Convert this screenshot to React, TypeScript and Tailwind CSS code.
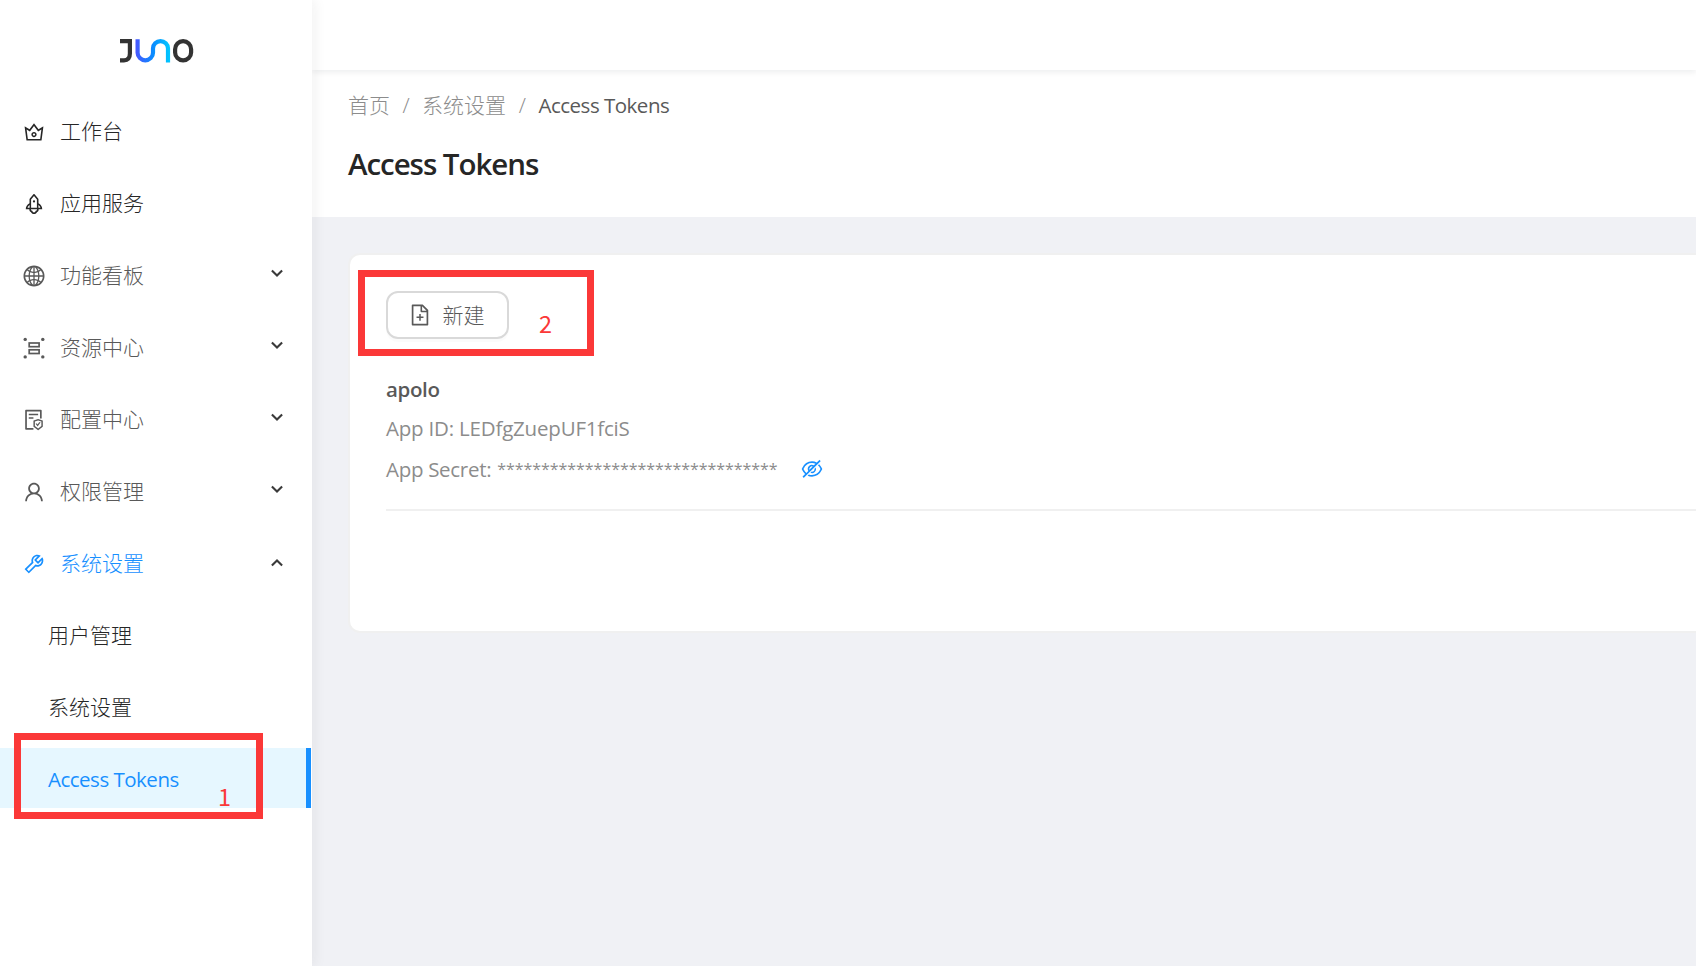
import type { ReactNode } from "react";
import {
  AiOutlineCrown,
  AiOutlineRocket,
  AiOutlineGlobal,
  AiOutlineFileProtect,
  AiOutlineUser,
  AiOutlineTool,
  AiOutlineFileAdd,
  AiOutlineEyeInvisible,
} from "react-icons/ai";

function Logo() {
  return (
    <svg width="76" height="26" viewBox="0 0 76 26" fill="none">
      <defs>
        <linearGradient id="wave" x1="16" y1="0" x2="52" y2="0" gradientUnits="userSpaceOnUse">
          <stop offset="0" stopColor="#4a55ff" />
          <stop offset="0.5" stopColor="#0a8cff" />
          <stop offset="1" stopColor="#00ccff" />
        </linearGradient>
      </defs>
      <path d="M1 3.2H10.9V15.5Q10.9 22.3 5 22.3H1" stroke="#333333" strokeWidth="4.2" />
      <path
        d="M18.6 1.2V14.8A7.7 7.5 0 0 0 34 14.8V10.5A7.5 7.3 0 0 1 49 10.5V24.4"
        stroke="url(#wave)"
        strokeWidth="4.2"
      />
      <rect x="56.1" y="3.2" width="16" height="19.2" rx="8" stroke="#333333" strokeWidth="4.2" />
    </svg>
  );
}

function GroupIcon() {
  return (
    <svg width="24" height="24" viewBox="0 0 24 24" fill="none">
      <g fill="currentColor">
        <circle cx="3.2" cy="3.4" r="1.7" />
        <circle cx="20.8" cy="3.4" r="1.7" />
        <circle cx="3.2" cy="20.9" r="1.7" />
        <circle cx="20.8" cy="20.9" r="1.7" />
      </g>
      <g stroke="currentColor" strokeWidth="1.7">
        <rect x="7.2" y="7" width="9.9" height="3.7" />
        <rect x="7.2" y="13.8" width="9.9" height="3.7" />
      </g>
    </svg>
  );
}

function Chevron({ up = false }: { up?: boolean }) {
  return (
    <svg width="12" height="9" viewBox="0 0 12 9" fill="none" className={up ? "" : "-mt-0.5"}>
      <path
        d={up ? "M0.9 7.6L6 2.5L11.1 7.6" : "M0.9 1.4L6 6.5L11.1 1.4"}
        stroke="#3a3a3a"
        strokeWidth="2.1"
      />
    </svg>
  );
}

function MenuItem({
  icon,
  label,
  tone,
  arrow,
}: {
  icon: ReactNode;
  label: string;
  tone: string;
  arrow?: "up" | "down";
}) {
  return (
    <li className={`flex h-[60px] items-center pr-[29.5px] pl-[22.4px] ${tone}`}>
      <span className="mt-[3px] w-6 text-2xl">{icon}</span>
      <span className="mt-[3px] ml-[13.6px] grow font-light">{label}</span>
      {arrow && <Chevron up={arrow === "up"} />}
    </li>
  );
}

function Sidebar() {
  return (
    <aside className="relative z-10 flex w-[312px] shrink-0 flex-col bg-white shadow-[3px_0_12px_rgba(29,35,41,0.06)]">
      <div className="flex h-[100px] items-center pt-0.5 pl-[119px]">
        <Logo />
      </div>
      <ul className="flex flex-col gap-3">
        <MenuItem icon={<AiOutlineCrown />} label="工作台" tone="text-[#262626]" />
        <MenuItem icon={<AiOutlineRocket />} label="应用服务" tone="text-[#262626]" />
        <MenuItem icon={<AiOutlineGlobal />} label="功能看板" tone="text-[#595959]" arrow="down" />
        <MenuItem icon={<GroupIcon />} label="资源中心" tone="text-[#595959]" arrow="down" />
        <MenuItem icon={<AiOutlineFileProtect />} label="配置中心" tone="text-[#595959]" arrow="down" />
        <MenuItem icon={<AiOutlineUser />} label="权限管理" tone="text-[#595959]" arrow="down" />
        <MenuItem icon={<AiOutlineTool />} label="系统设置" tone="text-[#1890ff]" arrow="up" />
        <li className="flex h-[60px] items-center pt-[3px] pl-12 font-light text-[#262626]">用户管理</li>
        <li className="flex h-[60px] items-center pt-[3px] pl-12 font-light text-[#262626]">系统设置</li>
        <li className="relative mr-px flex h-[60px] items-center border-r-5 border-[#1890ff] bg-[#e6f7ff] pl-12 text-[#1890ff]">
          <span className="mt-0.5 text-[20.5px] tracking-[-0.5px]">Access Tokens</span>
          <div className="absolute -top-[15px] left-3.5 h-[86px] w-[249px] border-7 border-[#fb3838]">
            <span className="absolute top-[40px] left-[197px] font-['Noto_Sans_CJK_SC',sans-serif] text-[23.5px] leading-8 text-[#fb3838]">1</span>
          </div>
        </li>
      </ul>
    </aside>
  );
}

function PageHeader() {
  return (
    <div className="h-[147px] bg-white pt-5 pl-9">
      <nav className="flex h-8 items-center font-light text-[#8c8c8c]">
        <span>首页</span>
        <span className="w-8 text-center">/</span>
        <span>系统设置</span>
        <span className="w-[32.5px] text-center">/</span>
        <span className="-mt-0.5 text-[20.5px] font-normal tracking-[-0.5px] text-[#595959]">Access Tokens</span>
      </nav>
      <h1 className="mt-[18px] text-[29.5px] leading-[48px] font-semibold tracking-[-1.05px] text-[#262626]">
        Access Tokens
      </h1>
    </div>
  );
}

function TokenCard() {
  return (
    <section className="mt-[36px] ml-[36px] h-[380px] rounded-l-xl border-2 border-r-0 border-[#f0f0f0] bg-white pt-9 pl-9">
      <div className="relative">
        <button className="flex h-12 w-[123px] items-center rounded-xl border-2 border-[#d9d9d9] pl-[20.4px] text-[#595959] shadow-[0_3px_0_rgba(0,0,0,0.015)]">
          <AiOutlineFileAdd className="text-2xl" />
          <span className="mt-px ml-2.5 font-light">新建</span>
        </button>
        <div className="absolute -top-[21px] -left-7 h-[86px] w-[236px] border-7 border-[#fb3838]">
          <span className="absolute top-[30px] left-[174px] font-['Noto_Sans_CJK_SC',sans-serif] text-[23.5px] leading-8 text-[#fb3838]">2</span>
        </div>
      </div>
      <div className="flex h-[172px] flex-col border-b-2 border-[#f0f0f0] pt-[34px] text-[20.5px] text-[#8c8c8c]">
        <div className="leading-8 font-semibold tracking-[-0.35px] text-[#595959]">apolo</div>
        <div className="mt-[7px] leading-8 tracking-[-0.2px]">App ID: LEDfgZuepUF1fciS</div>
        <div className="mt-[9px] flex items-center leading-8">
          <span className="tracking-[-0.3px]">App Secret:</span>
          <span className="-mt-px ml-1.5 text-base tracking-[-0.05px]">{"*".repeat(32)}</span>
          <AiOutlineEyeInvisible className="-mt-px ml-[22px] text-2xl text-[#1890ff]" />
        </div>
      </div>
    </section>
  );
}

export default function App() {
  return (
    <div className="flex h-[966px] w-full overflow-hidden bg-[#f0f1f5] font-['Open_Sans','Noto_Sans_CJK_SC',sans-serif] text-[21px]">
      <Sidebar />
      <main className="min-w-0 grow">
        <header className="relative h-[70px] bg-white shadow-[0_2px_6px_rgba(0,21,41,0.08)]" />
        <PageHeader />
        <TokenCard />
      </main>
    </div>
  );
}
